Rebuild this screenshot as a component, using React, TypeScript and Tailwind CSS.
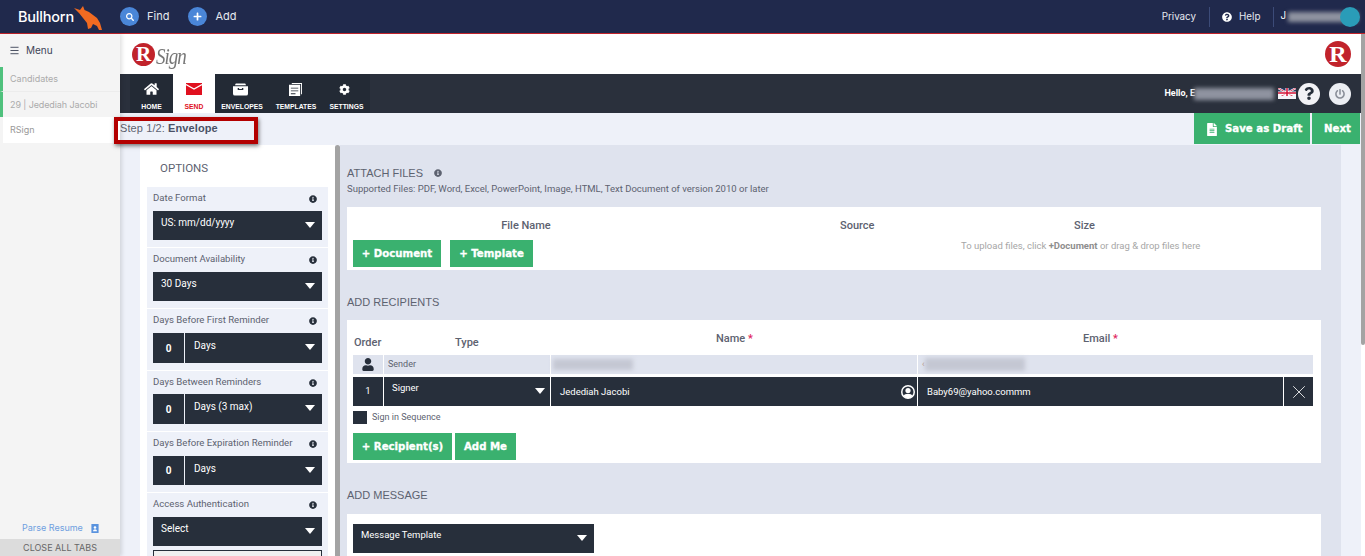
import { FaHome, FaCog, FaInfoCircle, FaQuestion, FaPowerOff, FaUser, FaFileAlt, FaSearch, FaPlus, FaQuestionCircle } from 'react-icons/fa'
import { Menu, X } from 'lucide-react'

const Caret = ({ className = '' }: { className?: string }) => (
  <svg viewBox="0 0 10 6" className={`w-[10px] h-[6px] fill-white ${className}`}>
    <path d="M0 0h10L5 6z" />
  </svg>
)

const Info = () => <FaInfoCircle className="w-[8px] h-[8px] text-[#272f3b]" />

const GreenButton = ({ label, className = '' }: { label: string; className?: string }) => (
  <button className={`h-[27px] bg-[#3ab16f] text-white text-[10.2px] font-bold font-['DejaVu_Sans',sans-serif] [-webkit-text-stroke:0.3px_white] ${className}`}>
    {label}
  </button>
)

const OptionGroup = ({ label, value, num, h = 'h-[60px]', sh = 'h-[29px]', mt = 'mt-[6px]' }: { label: string; value: string; num?: boolean; h?: string; sh?: string; mt?: string }) => (
  <div className={`${h} mb-px bg-[#eef1f9] px-[6px] pt-[5px]`}>
    <div className="flex items-center justify-between pr-[5px] h-[13px] text-[9.6px] text-[#5d6270]">
      <span>{label}</span>
      <Info />
    </div>
    <div className={`${mt} ${sh} flex gap-px`}>
      {num && <div className="w-[31px] bg-[#272f3b] text-white text-[10px] font-bold flex items-center justify-center">0</div>}
      <div className={`flex-1 bg-[#272f3b] text-white text-[10px] flex justify-between items-start ${num ? 'pl-[9px] pt-[5px]' : 'pl-[8px] pt-[4px]'} pr-[7px]`}>
        <span>{value}</span>
        <Caret className={num ? 'mt-[6px]' : 'mt-[7px]'} />
      </div>
    </div>
  </div>
)

const Blur = ({ className }: { className: string }) => <div className={`blur-[2px] ${className}`} />

const NavItem = ({ icon, label, active }: { icon: React.ReactNode; label: string; active?: boolean }) => (
  <div className={`flex flex-col items-center pt-[6px] h-[39px] ${active ? 'w-[42px] bg-white text-[#e0101f]' : 'text-white'}`}>
    <div className="h-[18px] flex items-center">{icon}</div>
    <span className="mt-[4px] text-[6.8px] font-bold font-['Liberation_Sans',sans-serif] whitespace-nowrap">{label}</span>
  </div>
)

const Bull = () => (
  <svg viewBox="0 0 40 32" className="w-[40px] h-[32px] shrink-0 fill-[#f26b21]">
    <path d="M5 7l6 2 3-4 1.500 4 4.500 2 8 6 3 5 2 7h-3l-2-4-4-2-2 4-3 1-1-6-4-5-4-5z" />
  </svg>
)

const Flag = () => (
  <svg viewBox="0 0 18 11" className="w-[18px] h-[11px]">
    <rect width="18" height="11" fill="#f4f4f8" />
    <path d="M0 0h18v5H0z" fill="#26375f" />
    <path d="M0 0l18 10M18 0L0 10" stroke="#fff" strokeWidth="2" />
    <path d="M0 0l18 10M18 0L0 10" stroke="#d21034" strokeWidth=".7" />
    <path d="M9 0v10M0 5h18" stroke="#fff" strokeWidth="3" />
    <path d="M9 0v10M0 5h18" stroke="#d21034" strokeWidth="1.500" />
    <rect y="8" width="18" height="3" fill="#f4f4f8" />
  </svg>
)

const RBadge = ({ size }: { size: string }) => (
  <div className={`${size} rounded-full bg-[#c1232b] flex items-center justify-center text-white font-bold font-['Liberation_Serif',serif] leading-none`}>
    R
  </div>
)

const UserDot = () => (
  <svg viewBox="0 0 14 14" className="w-[14px] h-[14px]">
    <circle cx="7" cy="7" r="7" fill="#fff" />
    <circle cx="7" cy="7" r="5.500" fill="#272f3b" />
    <circle cx="7" cy="5.500" r="2.600" fill="#fff" />
    <path d="M2.500 11c1-3 8-3 9 0a5.500 5.500 0 0 1-9 0z" fill="#fff" />
  </svg>
)

const App = () => {
  return (
    <div className="w-[1365px] h-[556px] overflow-hidden flex flex-col bg-white font-['Roboto',sans-serif]">
      {/* bullhorn top bar */}
      <div className="h-[33px] shrink-0 bg-[#20294c] flex items-center text-white text-[11px] font-['Inter',sans-serif]">
        <div className="w-[120px] shrink-0 pl-[18px] flex items-center">
          <span className="text-[14.5px] font-medium tracking-[-0.2px]">Bullhorn</span>
          <div className="-ml-[5px]"><Bull /></div>
        </div>
        <div className="w-[19px] h-[19px] rounded-full bg-[#4a86d8] flex items-center justify-center">
          <FaSearch className="w-[8px] h-[8px]" />
        </div>
        <span className="ml-[8px] text-[#e6e8ef]">Find</span>
        <div className="ml-[19px] w-[19px] h-[19px] rounded-full bg-[#4a86d8] flex items-center justify-center">
          <FaPlus className="w-[9px] h-[9px]" />
        </div>
        <span className="ml-[8px] text-[#e6e8ef]">Add</span>
        <div className="ml-auto flex items-center text-[9.8px] pr-[7px]">
          <span className="mt-[2px] text-[#e6e8ef]">Privacy</span>
          <div className="ml-[13px] w-px h-[20px] bg-[#3c4b78]" />
          <FaQuestionCircle className="ml-[12px] w-[10px] h-[10px]" />
          <span className="mt-[2px] ml-[7px] text-[#e6e8ef]">Help</span>
          <div className="ml-[13px] w-px h-[20px] bg-[#3c4b78]" />
          <span className="ml-[6px]">J</span>
          <div className="relative ml-[2px] w-[70px] h-[20px] flex items-center">
            <Blur className="w-[70px] h-[10px] bg-[#8f93a0]" />
            <div className="absolute left-[52px] top-0 w-[20px] h-[20px] rounded-full bg-[#2a9cb8] blur-[0.5px]" />
          </div>
        </div>
      </div>
      <div className="h-px shrink-0 bg-[#c1232b]" />

      <div className="flex-1 flex min-h-0 relative">
        {/* bullhorn side menu */}
        <div className="w-[120px] shrink-0 bg-[#f4f4f4] flex flex-col shadow-[2px_0_4px_rgba(0,0,0,0.12)] z-10 text-[9px] font-['Inter',sans-serif]">
          <div className="h-[33px] flex items-center pl-[9px] text-[#3d4457]">
            <Menu className="w-[11px] h-[11px]" strokeWidth={2} />
            <span className="ml-[6px] text-[10px]">Menu</span>
          </div>
          <div className="h-[25px] border-l-[3px] border-[#4fc17d] border-b border-b-[#ececec] flex items-center pl-[7px] text-[#ababab]">Candidates</div>
          <div className="h-[25px] border-l-[3px] border-[#4fc17d] flex items-center pl-[7px] text-[#ababab] tracking-[-0.1px]">29 | Jedediah Jacobi</div>
          <div className="h-[26px] ml-[3px] bg-white flex items-center pl-[7px] text-[#999]">RSign</div>
          <div className="mt-auto h-[22px] flex items-center pl-[22px] text-[#6f9fe0]">
            <span>Parse Resume</span>
            <svg viewBox="0 0 8 10" className="ml-[8px] w-[8px] h-[9px] fill-[#5a93de]">
              <path d="M0 0h8v10H0z" />
              <circle cx="4" cy="4" r="1.400" fill="#fff" />
              <path d="M1.800 8c0-3 4.400-3 4.400 0z" fill="#fff" />
            </svg>
          </div>
          <div className="h-[17px] bg-[#dcdcdc] flex items-center justify-center text-[#666]">CLOSE ALL TABS</div>
        </div>

        {/* rsign frame */}
        <div className="flex-1 flex flex-col min-w-0">
          <div className="h-[40px] shrink-0 bg-white flex items-center justify-between pl-[12px] pr-[10px]">
            <div className="flex items-center">
              <RBadge size="w-[23px] h-[23px] text-[21px]" />
              <span className="ml-[1px] mt-[6px] italic text-[19px] text-[#777] font-['Liberation_Serif',serif] tracking-[-1px] scale-y-125">Sign</span>
            </div>
            <RBadge size="w-[26px] h-[26px] text-[24px]" />
          </div>

          <div className="h-[39px] shrink-0 bg-[#2a303c] flex items-center pl-[10px] pr-[10px]">
            <div className="flex items-center bg-[#232a35] h-[39px]">
              <div className="w-[43px] flex justify-center">
                <NavItem icon={<FaHome className="w-[15px] h-[14px]" />} label="HOME" />
              </div>
              <NavItem
                active
                label="SEND"
                icon={
                  <svg viewBox="0 0 16 12" className="w-[16px] h-[12px]">
                    <path d="M0 0h16v12H0z" fill="#e0101f" />
                    <path d="M0 1.500 8 6l8-4.500" fill="none" stroke="#fff" strokeWidth="1.300" />
                  </svg>
                }
              />
              <div className="w-[54px] flex justify-center">
                <NavItem
                  label="ENVELOPES"
                  icon={
                    <svg viewBox="0 0 16 13" className="w-[15px] h-[13px] -ml-[4px] fill-white">
                      <path d="M3 0h10l1 2H2zM0 3h16v8a2 2 0 0 1-2 2H2a2 2 0 0 1-2-2zm5 2v2h6V5H9.500v1h-3V5z" fillRule="evenodd" />
                    </svg>
                  }
                />
              </div>
              <div className="w-[54px] flex justify-center">
                <NavItem
                  label="TEMPLATES"
                  icon={
                    <svg viewBox="0 0 14 14" className="w-[13px] h-[13px] -ml-[1px] fill-white">
                      <path d="M3 0h11v12h-1V1H3zM0 2h12v12H0zm2 3v1h8V5zm0 3v1h8V8zm0 3v1h5v-1z" fillRule="evenodd" />
                    </svg>
                  }
                />
              </div>
              <div className="w-[47px] flex justify-center">
                <NavItem icon={<FaCog className="w-[11px] h-[11px] -ml-[4px]" />} label="SETTINGS" />
              </div>
            </div>
            <div className="ml-auto flex items-center text-white text-[9px] font-bold">
              <span>Hello, E</span>
              <Blur className="w-[80px] h-[12px] -ml-px bg-[#8f93a0]" />
              <div className="ml-[4px] w-[18px]"><Flag /></div>
              <div className="ml-[2px] w-[22px] h-[22px] rounded-full bg-[#f2f2f6] flex items-center justify-center">
                <FaQuestion className="w-[12px] h-[13px] text-[#272f3b]" />
              </div>
              <div className="ml-[9px] w-[22px] h-[22px] rounded-full bg-[#eceef3] flex items-center justify-center">
                <FaPowerOff className="w-[10px] h-[10px] text-[#8a8f99]" />
              </div>
            </div>
          </div>

          <div className="h-[32px] shrink-0 bg-[#eef1f9] flex items-start pr-px">
            <div className="pt-[9px] text-[11px] leading-[13px] tracking-[0.1px] text-[#5d6270] font-['Liberation_Sans',sans-serif]">
              Step 1/2: <span className="font-bold text-[#4a5166]">Envelope</span>
            </div>
            <button className="ml-auto h-[31px] w-[116px] bg-[#3ab16f] text-white flex items-center pt-px pl-[13px] text-[10.2px] font-bold font-['DejaVu_Sans',sans-serif] [-webkit-text-stroke:0.3px_white]">
              <FaFileAlt className="w-[10px] h-[13px] mr-[8px]" />
              Save as Draft
            </button>
            <button className="ml-[2px] h-[31px] w-[48px] pt-px pl-[3px] bg-[#3ab16f] text-white text-[10.2px] font-bold font-['DejaVu_Sans',sans-serif] [-webkit-text-stroke:0.3px_white]">Next</button>
          </div>

          <div className="flex-1 flex min-h-0 bg-[#eef1f9]">
            <div className="ml-[20px] w-[195px] shrink-0 bg-white px-[7px] overflow-hidden">
              <div className="h-[42px] pl-[13px] pt-[16px] text-[11.5px] leading-[14px] text-[#5d6270]">OPTIONS</div>
              <OptionGroup label="Date Format" value="US: mm/dd/yyyy" />
              <OptionGroup label="Document Availability" value="30 Days" />
              <OptionGroup label="Days Before First Reminder" value="Days" num h="h-[61px]" sh="h-[30px]" />
              <OptionGroup label="Days Between Reminders" value="Days (3 max)" num sh="h-[30px]" mt="mt-[5px]" />
              <OptionGroup label="Days Before Expiration Reminder" value="Days" num />
              <div className="bg-[#eef1f9] px-[6px] pt-[5px] h-[70px]">
                <div className="flex items-center justify-between pr-[5px] h-[13px] text-[9.6px] text-[#5d6270]">
                  <span>Access Authentication</span>
                  <Info />
                </div>
                <div className="mt-[6px] h-[29px] bg-[#272f3b] text-white text-[10px] flex justify-between items-start pl-[8px] pr-[7px] pt-[4px]">
                  <span>Select</span>
                  <Caret className="mt-[7px]" />
                </div>
                <div className="mt-[4px] h-[20px] border border-[#272f3b] bg-[#f0f0f0]" />
              </div>
            </div>
            <div className="w-[5px] shrink-0 bg-[#a3a3a3] rounded-t-[3px]" />

            <div className="w-[1001px] shrink-0 bg-[#dfe3ee] pl-[7px] pr-[20px] overflow-hidden">
              <div className="pt-[21px] h-[62px]">
                <div className="flex items-center text-[11px] leading-[14px] text-[#5d6270] font-['Liberation_Sans',sans-serif]">
                  ATTACH FILES
                  <FaInfoCircle className="ml-[11px] w-[8px] h-[8px] text-[#5d6270]" />
                </div>
                <div className="mt-[3px] text-[9.5px] leading-[12px] text-[#5d6270]">
                  Supported Files: PDF, Word, Excel, PowerPoint, Image, HTML, Text Document of version 2010 or later
                </div>
              </div>
              <div className="h-[63px] bg-white px-[6px] pt-[12px] relative">
                <div className="grid grid-cols-[346px_170px_1fr] text-[11px] font-medium text-[#5d6270] leading-[14px]">
                  <span className="text-center">File Name</span>
                  <span className="pl-[141px] whitespace-nowrap">Source</span>
                  <span className="pl-[205px]">Size</span>
                </div>
                <div className="mt-[7px] flex gap-[9px]">
                  <GreenButton label="+ Document" className="w-[88px]" />
                  <GreenButton label="+ Template" className="w-[83px]" />
                </div>
                <div className="absolute left-[614px] top-[33px] text-[9.5px] leading-[12px] text-[#a6a6a6] whitespace-nowrap">
                  To upload files, click <span className="font-bold text-[#8e8e8e]">+Document</span> or drag &amp; drop files here
                </div>
              </div>

              <div className="h-[50px] pt-[25px] text-[11px] leading-[14px] text-[#5d6270] font-['Liberation_Sans',sans-serif]">ADD RECIPIENTS</div>

              <div className="h-[143px] bg-white pl-[6px] pr-[8px]">
                <div className="h-[35px] relative text-[11px] font-medium text-[#5d6270]">
                  <span className="absolute left-[1px] top-[15px]">Order</span>
                  <span className="absolute left-[102px] top-[15px]">Type</span>
                  <span className="absolute left-[363px] top-[11px]">Name <span className="text-[#e0245e]">*</span></span>
                  <span className="absolute left-[730px] top-[11px]">Email <span className="text-[#e0245e]">*</span></span>
                </div>
                <div className="h-[19px] flex gap-px text-[9px] text-[#5d6270]">
                  <div className="w-[30px] bg-[#dfe3ee] flex items-center justify-center">
                    <FaUser className="w-[12px] h-[13px] text-[#272f3b]" />
                  </div>
                  <div className="w-[166px] bg-[#dfe3ee] flex items-center pl-[4px]">Sender</div>
                  <div className="w-[366px] bg-[#dfe3ee] flex items-center pl-[2px]">
                    <Blur className="w-[80px] h-[11px] bg-[#c4c7d3]" />
                  </div>
                  <div className="flex-1 bg-[#dfe3ee] flex items-center pl-[4px]">
                    <span className="text-[#b08a7a]">‹</span>
                    <Blur className="w-[100px] h-[13px] bg-[#c4c7d3]" />
                  </div>
                </div>
                <div className="mt-[3px] h-[29px] flex gap-px text-[9.5px] text-white">
                  <div className="w-[30px] bg-[#272f3b] flex items-center justify-center">1</div>
                  <div className="w-[166px] bg-[#272f3b] flex justify-between items-start pl-[8px] pr-[5px] pt-[4px]">
                    <span>Signer</span>
                    <Caret className="mt-[7px]" />
                  </div>
                  <div className="w-[366px] bg-[#272f3b] flex items-center justify-between pt-px pl-[9px] pr-[2px]">
                    <span>Jedediah Jacobi</span>
                    <UserDot />
                  </div>
                  <div className="flex-1 bg-[#272f3b] flex items-center pt-px pl-[9px]">Baby69@yahoo.commm</div>
                  <div className="w-[29px] bg-[#272f3b] flex items-center justify-center">
                    <X className="w-[22px] h-[22px]" strokeWidth={0.9} />
                  </div>
                </div>
                <div className="mt-[5px] h-[13px] flex items-center text-[9px] text-[#5d6270]">
                  <div className="w-[14px] h-[13px] bg-[#272f3b]" />
                  <span className="ml-[5px]">Sign in Sequence</span>
                </div>
                <div className="mt-[9px] flex gap-[3px]">
                  <GreenButton label="+ Recipient(s)" className="w-[99px]" />
                  <GreenButton label="Add Me" className="w-[61px]" />
                </div>
              </div>

              <div className="h-[51px] pt-[25px] text-[11px] leading-[14px] text-[#5d6270] font-['Liberation_Sans',sans-serif]">ADD MESSAGE</div>

              <div className="h-[60px] bg-white px-[6px] pt-[10px]">
                <div className="w-[241px] h-[29px] bg-[#272f3b] text-white text-[9.5px] flex justify-between items-start pl-[8px] pr-[7px] pt-[4px]">
                  <span>Message Template</span>
                  <Caret className="mt-[7px]" />
                </div>
              </div>
            </div>
            <div className="flex-1 bg-[#eef1f9]" />
          </div>
        </div>

        {/* frame scrollbar */}
        <div className="w-[4px] shrink-0 bg-white">
          <div className="h-[311px] bg-[#a3a3a3] rounded-b-[2px]" />
        </div>

        {/* annotation box drawn over the step label */}
        <div className="absolute z-20 left-[114px] top-[83px] w-[144px] h-[27px] border-[4px] border-[#b30000] shadow-[1px_2px_4px_rgba(0,0,0,0.5)]" />
      </div>
    </div>
  )
}

export default App
